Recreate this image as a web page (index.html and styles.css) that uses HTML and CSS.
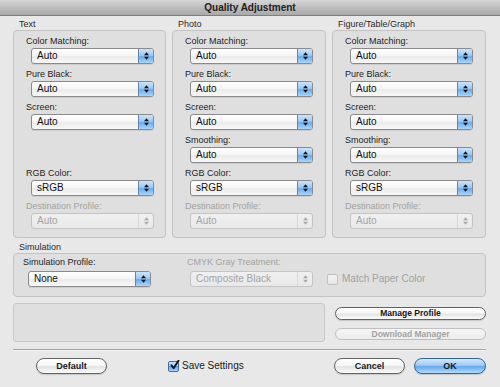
FILE: index.html
```html
<!DOCTYPE html>
<html>
<head>
<meta charset="utf-8">
<link rel="stylesheet" href="styles.css">
</head>
<body>
<div class="window">
  <div class="titlebar">Quality Adjustment</div>
  <div class="main">
    <div class="groups">
      <section class="group">
        <div class="group-title">Text</div>
        <div class="box">
          <div class="field"><div class="label">Color Matching:</div><div class="popup"><span class="val">Auto</span><span class="btn"><svg width="7" height="10" viewBox="0 0 7 10"><path d="M1 4.2L3.5 1.2L6 4.2Z M1 5.8L6 5.8L3.5 8.8Z"/></svg></span></div></div>
          <div class="field"><div class="label">Pure Black:</div><div class="popup"><span class="val">Auto</span><span class="btn"><svg width="7" height="10" viewBox="0 0 7 10"><path d="M1 4.2L3.5 1.2L6 4.2Z M1 5.8L6 5.8L3.5 8.8Z"/></svg></span></div></div>
          <div class="field"><div class="label">Screen:</div><div class="popup"><span class="val">Auto</span><span class="btn"><svg width="7" height="10" viewBox="0 0 7 10"><path d="M1 4.2L3.5 1.2L6 4.2Z M1 5.8L6 5.8L3.5 8.8Z"/></svg></span></div></div>
          <div class="field spacer"></div>
          <div class="field"><div class="label">RGB Color:</div><div class="popup"><span class="val">sRGB</span><span class="btn"><svg width="7" height="10" viewBox="0 0 7 10"><path d="M1 4.2L3.5 1.2L6 4.2Z M1 5.8L6 5.8L3.5 8.8Z"/></svg></span></div></div>
          <div class="field"><div class="label dim">Destination Profile:</div><div class="popup disabled"><span class="val">Auto</span><span class="btn"><svg width="7" height="10" viewBox="0 0 7 10"><path d="M1 4.2L3.5 1.2L6 4.2Z M1 5.8L6 5.8L3.5 8.8Z"/></svg></span></div></div>
        </div>
      </section>
      <section class="group">
        <div class="group-title">Photo</div>
        <div class="box">
          <div class="field"><div class="label">Color Matching:</div><div class="popup"><span class="val">Auto</span><span class="btn"><svg width="7" height="10" viewBox="0 0 7 10"><path d="M1 4.2L3.5 1.2L6 4.2Z M1 5.8L6 5.8L3.5 8.8Z"/></svg></span></div></div>
          <div class="field"><div class="label">Pure Black:</div><div class="popup"><span class="val">Auto</span><span class="btn"><svg width="7" height="10" viewBox="0 0 7 10"><path d="M1 4.2L3.5 1.2L6 4.2Z M1 5.8L6 5.8L3.5 8.8Z"/></svg></span></div></div>
          <div class="field"><div class="label">Screen:</div><div class="popup"><span class="val">Auto</span><span class="btn"><svg width="7" height="10" viewBox="0 0 7 10"><path d="M1 4.2L3.5 1.2L6 4.2Z M1 5.8L6 5.8L3.5 8.8Z"/></svg></span></div></div>
          <div class="field"><div class="label">Smoothing:</div><div class="popup"><span class="val">Auto</span><span class="btn"><svg width="7" height="10" viewBox="0 0 7 10"><path d="M1 4.2L3.5 1.2L6 4.2Z M1 5.8L6 5.8L3.5 8.8Z"/></svg></span></div></div>
          <div class="field"><div class="label">RGB Color:</div><div class="popup"><span class="val">sRGB</span><span class="btn"><svg width="7" height="10" viewBox="0 0 7 10"><path d="M1 4.2L3.5 1.2L6 4.2Z M1 5.8L6 5.8L3.5 8.8Z"/></svg></span></div></div>
          <div class="field"><div class="label dim">Destination Profile:</div><div class="popup disabled"><span class="val">Auto</span><span class="btn"><svg width="7" height="10" viewBox="0 0 7 10"><path d="M1 4.2L3.5 1.2L6 4.2Z M1 5.8L6 5.8L3.5 8.8Z"/></svg></span></div></div>
        </div>
      </section>
      <section class="group">
        <div class="group-title">Figure/Table/Graph</div>
        <div class="box">
          <div class="field"><div class="label">Color Matching:</div><div class="popup"><span class="val">Auto</span><span class="btn"><svg width="7" height="10" viewBox="0 0 7 10"><path d="M1 4.2L3.5 1.2L6 4.2Z M1 5.8L6 5.8L3.5 8.8Z"/></svg></span></div></div>
          <div class="field"><div class="label">Pure Black:</div><div class="popup"><span class="val">Auto</span><span class="btn"><svg width="7" height="10" viewBox="0 0 7 10"><path d="M1 4.2L3.5 1.2L6 4.2Z M1 5.8L6 5.8L3.5 8.8Z"/></svg></span></div></div>
          <div class="field"><div class="label">Screen:</div><div class="popup"><span class="val">Auto</span><span class="btn"><svg width="7" height="10" viewBox="0 0 7 10"><path d="M1 4.2L3.5 1.2L6 4.2Z M1 5.8L6 5.8L3.5 8.8Z"/></svg></span></div></div>
          <div class="field"><div class="label">Smoothing:</div><div class="popup"><span class="val">Auto</span><span class="btn"><svg width="7" height="10" viewBox="0 0 7 10"><path d="M1 4.2L3.5 1.2L6 4.2Z M1 5.8L6 5.8L3.5 8.8Z"/></svg></span></div></div>
          <div class="field"><div class="label">RGB Color:</div><div class="popup"><span class="val">sRGB</span><span class="btn"><svg width="7" height="10" viewBox="0 0 7 10"><path d="M1 4.2L3.5 1.2L6 4.2Z M1 5.8L6 5.8L3.5 8.8Z"/></svg></span></div></div>
          <div class="field"><div class="label dim">Destination Profile:</div><div class="popup disabled"><span class="val">Auto</span><span class="btn"><svg width="7" height="10" viewBox="0 0 7 10"><path d="M1 4.2L3.5 1.2L6 4.2Z M1 5.8L6 5.8L3.5 8.8Z"/></svg></span></div></div>
        </div>
      </section>
    </div>

    <section class="sim">
      <div class="group-title">Simulation</div>
      <div class="sim-box">
        <div class="sim-col first">
          <div class="label">Simulation Profile:</div>
          <div class="popup"><span class="val">None</span><span class="btn"><svg width="7" height="10" viewBox="0 0 7 10"><path d="M1 4.2L3.5 1.2L6 4.2Z M1 5.8L6 5.8L3.5 8.8Z"/></svg></span></div>
        </div>
        <div class="sim-col second">
          <div class="label dim">CMYK Gray Treatment:</div>
          <div class="popup disabled"><span class="val">Composite Black</span><span class="btn"><svg width="7" height="10" viewBox="0 0 7 10"><path d="M1 4.2L3.5 1.2L6 4.2Z M1 5.8L6 5.8L3.5 8.8Z"/></svg></span></div>
        </div>
        <div class="sim-col third">
          <span class="check off"></span><span class="check-text dim">Match Paper Color</span>
        </div>
      </div>
    </section>

    <div class="lower">
      <div class="info"></div>
      <div class="side-buttons">
        <div class="button small strong">Manage Profile</div>
        <div class="button small disabled">Download Manager</div>
      </div>
    </div>

    <div class="sep"></div>

    <div class="footer">
      <div class="button big default-btn">Default</div>
      <div class="save">
        <span class="check on"><svg width="11" height="11" viewBox="0 0 11 11"><path d="M2.5 5.2L4.6 8.3L9.6 0.6" fill="none" stroke="#111" stroke-width="1.8" stroke-linecap="round" stroke-linejoin="round"/></svg></span>
        <span class="check-text">Save Settings</span>
      </div>
      <div class="button big cancel-btn">Cancel</div>
      <div class="button big ok-btn">OK</div>
    </div>
  </div>
</div>
</body>
</html>
```

FILE: styles.css
```css
* { box-sizing: border-box; }
html, body { margin: 0; padding: 0; }
body {
  width: 500px;
  height: 387px;
  overflow: hidden;
  background: #e8e8e8;
  font-family: "Liberation Sans", Arial, sans-serif;
  color: #1c1c1c;
}
.window { width: 500px; height: 387px; }

.titlebar {
  height: 16px;
  background: linear-gradient(#d6d6d6, #bdbdbd 50%, #a9a9a9);
  border-bottom: 1px solid #7f7f7f;
  text-align: center;
  font-weight: bold;
  font-size: 10px;
  line-height: 16px;
  color: #202020;
}

.main { padding: 3px 14px 0 13px; }

.groups {
  display: grid;
  grid-template-columns: 153px 154px 154px;
  column-gap: 6px;
}

.group-title {
  font-size: 9px;
  line-height: 11px;
  padding-left: 6px;
  color: #2a2a2a;
}

.box {
  height: 208px;
  border: 1px solid #c3c3c3;
  border-radius: 4px;
  background: #dfdfdf;
  padding: 5px 10px 8px 12px;
}

.field { height: 28px; }
.field + .field { margin-top: 5px; }

.label {
  font-size: 9px;
  line-height: 11px;
  margin-bottom: 1px;
  color: #1e1e1e;
  white-space: nowrap;
}
.dim { color: #a2a2a2; }

.popup {
  display: flex;
  align-items: stretch;
  margin-left: 5px;
  width: 123px;
  height: 16px;
  border: 1px solid #8a8a8a;
  border-radius: 3px;
  background: linear-gradient(#ffffff, #f6f6f6 45%, #ebebeb 55%, #f8f8f8);
  box-shadow: 0 1px 0 rgba(0,0,0,0.08);
  font-size: 10px;
  color: #111;
  overflow: hidden;
}
.popup .val {
  flex: 1;
  padding-left: 5px;
  line-height: 14px;
  white-space: nowrap;
}
.popup .btn {
  width: 15px;
  display: flex;
  align-items: center;
  justify-content: center;
  background: linear-gradient(#cbe3fb, #9ccaf5 45%, #69acef 55%, #a9d6fc);
  border-left: 1px solid #5d86b7;
}
.popup .btn svg path { fill: #111; }

.popup.disabled {
  border-color: #c4c4c4;
  background: linear-gradient(#f0f0f0, #e9e9e9);
  color: #a4a4a4;
  box-shadow: none;
}
.popup.disabled .btn {
  background: transparent;
  border-left: 1px solid #d8d8d8;
}
.popup.disabled .btn svg path { fill: #a8a8a8; }

/* Simulation */
.sim { margin-top: 4px; }
.sim-box {
  display: flex;
  height: 44px;
  border: 1px solid #c3c3c3;
  border-radius: 4px;
  background: #dfdfdf;
  padding: 3px 0 0 9px;
}
.sim-col .label { margin-bottom: 3px; }
.sim-col.first { width: 164px; }
.sim-col.second { width: 140px; }
.sim-col.second .popup { margin-left: 3px; }
.sim-col.third {
  display: flex;
  align-items: center;
  height: 16px;
  margin-top: 14px;
}

.check {
  display: inline-block;
  width: 11px;
  height: 11px;
  border-radius: 2px;
}
.check.off {
  border: 1px solid #c2c2c2;
  background: linear-gradient(#f4f4f4, #e6e6e6);
}
.check.on {
  border: 1px solid #476c9e;
  background: linear-gradient(#cfe6fb, #8fc3f2 50%, #5ba5ee 50%, #a8d5fb);
  position: relative;
}
.check.on svg { position: absolute; left: 0; top: -2px; }
.check-text {
  font-size: 10px;
  margin-left: 4px;
  line-height: 12px;
}

/* Lower */
.lower {
  display: flex;
  margin-top: 6px;
}
.info {
  width: 312px;
  height: 39px;
  border: 1px solid #c8c8c8;
  border-radius: 3px;
  background: #dfdfdf;
}
.side-buttons {
  margin-left: 10px;
  padding-top: 4px;
  display: flex;
  flex-direction: column;
  gap: 8px;
}

.button {
  text-align: center;
  font-weight: bold;
  color: #1a1a1a;
  border: 1px solid #626262;
  background: linear-gradient(#ffffff, #f7f7f7 45%, #e3e3e3 55%, #fbfbfb);
  box-shadow: 0 1px 1px rgba(0,0,0,0.15);
}
.button.small {
  width: 151px;
  height: 13px;
  border-radius: 7px;
  font-size: 8.5px;
  line-height: 11px;
}
.button.small.disabled {
  color: #a3a3a3;
  border-color: #c0c0c0;
  background: linear-gradient(#f5f5f5, #ececec);
  box-shadow: none;
  height: 12px;
}

.sep {
  margin-top: 7px;
  height: 2px;
  border-top: 1px solid #a6a6a6;
  border-bottom: 1px solid #f4f4f4;
}

.footer {
  display: flex;
  align-items: center;
  margin-top: 7px;
  height: 16px;
}
.button.big {
  height: 16px;
  border-radius: 8px;
  font-size: 9px;
  line-height: 14px;
}
.default-btn { width: 71px; margin-left: 23px; }
.save {
  display: flex;
  align-items: center;
  margin-left: 61px;
}
.save .check-text { margin-left: 3px; color: #1a1a1a; }
.cancel-btn { width: 71px; margin-left: auto; }
.ok-btn {
  width: 72px;
  margin-left: 9px;
  border-color: #34649c;
  background: linear-gradient(#d2e8fc, #9fcaf3 45%, #64a9ef 55%, #b4dcfd);
}
```
